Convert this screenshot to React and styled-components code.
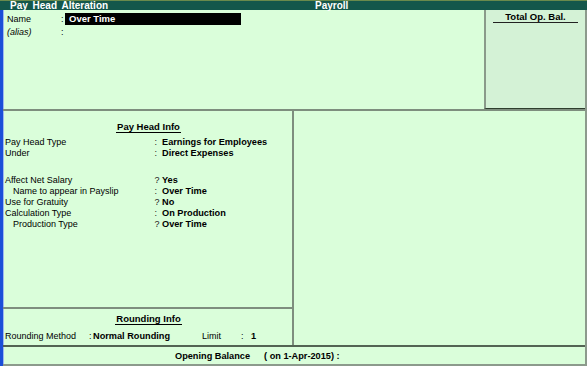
import React from "react";
import styled, { createGlobalStyle } from "styled-components";

const Global = createGlobalStyle`
  html, body { margin: 0; padding: 0; background: #dafeda; }
  body { font-family: "Liberation Sans", Arial, sans-serif; }
`;

const Screen = styled.div`
  width: 587px;
  height: 366px;
  display: flex;
  flex-direction: column;
  background: #dafeda;
  color: #000;
  font-size: 9px;
  overflow: hidden;
`;

const TitleBar = styled.div`
  height: 10px;
  flex: none;
  background: #14574b;
  border-top: 1px solid #6a8a4c;
  box-sizing: border-box;
  display: flex;
  align-items: center;
  color: #fff;
  font-weight: bold;
  font-size: 10px;
  line-height: 9px;
  padding-left: 10px;
`;

const TitleText = styled.span`
  word-spacing: 2px;
  width: ${(p) => p.$w}px;
`;

const Body = styled.div`
  flex: 1;
  display: flex;
  flex-direction: column;
  border-left: 3px solid #1b4fd8;
  border-right: 2px solid #8c9a8c;
  box-shadow: inset 1px 0 0 #9fb8ee;
`;

const TopSection = styled.div`
  height: 99px;
  flex: none;
  display: flex;
  border-bottom: 2px solid #7e8e7e;
`;

const NameArea = styled.div`
  flex: 1;
  padding: 2px 0 0 4px;
  display: flex;
  flex-direction: column;
`;

const NameRow = styled.div`
  display: flex;
  align-items: center;
  height: ${(p) => p.$h}px;
  font-size: 9px;
`;

const NameLabel = styled.span`
  width: 54px;
  font-style: ${(p) => (p.$italic ? "italic" : "normal")};
`;

const Colon = styled.span`
  width: ${(p) => p.$w}px;
`;

const InputBox = styled.div`
  width: 176px;
  height: 12px;
  background: #000;
  color: #fff;
  font-weight: bold;
  font-size: 9.5px;
  line-height: 12px;
  padding-left: 4px;
  box-sizing: border-box;
`;

const OpBalPanel = styled.div`
  width: 99px;
  flex: none;
  background: #d4f2d6;
  border-left: 2px solid #8a9a8a;
  border-bottom: 1px solid #2e3e2e;
  display: flex;
  flex-direction: column;
  align-items: stretch;
  padding-top: 1px;
`;

const OpBalTitle = styled.div`
  margin: 0 7px 0 7px;
  text-align: center;
  font-weight: bold;
  font-size: 9.5px;
  line-height: 11px;
  border-bottom: 1px solid #222;
`;

const Middle = styled.div`
  flex: 1;
  display: flex;
`;

const LeftColumn = styled.div`
  width: 289px;
  flex: none;
  display: flex;
  flex-direction: column;
  border-right: 2px solid #7e8e7e;
`;

const InfoArea = styled.div`
  flex: 1;
  padding: 10px 0 0 2px;
`;

const SectionTitle = styled.div`
  text-align: center;
  font-weight: bold;
  font-size: 9.5px;
  line-height: 11px;
  margin-bottom: ${(p) => p.$mb}px;
  span {
    border-bottom: 1px solid #000;
    padding: 0 1px;
  }
`;

const InfoRow = styled.div`
  display: grid;
  grid-template-columns: ${(p) => 149.5 - p.$indent}px 7.5px 1fr;
  padding-left: ${(p) => p.$indent}px;
  line-height: 11px;
  height: 11px;
  margin-top: ${(p) => p.$mt || 0}px;
  font-size: 9px;
`;

const Sep = styled.span`
  color: #222;
`;

const Value = styled.span`
  font-weight: bold;
  font-size: 9.2px;
  white-space: nowrap;
`;

const RoundingArea = styled.div`
  height: 38px;
  flex: none;
  border-top: 2px solid #7e8e7e;
  padding: 4px 0 0 2px;
  box-sizing: border-box;
`;

const RoundRow = styled.div`
  display: flex;
  line-height: 11px;
  font-size: 9px;
  white-space: nowrap;
`;

const Cell = styled.span`
  width: ${(p) => p.$w}px;
  flex: none;
  font-weight: ${(p) => (p.$bold ? "bold" : "normal")};
  font-size: ${(p) => (p.$bold ? "9.2px" : "9px")};
`;

const RightColumn = styled.div`
  flex: 1;
`;

const BottomBar = styled.div`
  height: 21px;
  flex: none;
  border-top: 2px solid #536453;
  border-bottom: 2px solid #8c9a8c;
  box-sizing: border-box;
  display: flex;
  align-items: center;
  padding-left: 172px;
  font-weight: bold;
  font-size: 9.2px;
`;

const Gap = styled.span`
  display: inline-block;
  width: ${(p) => p.$w}px;
`;

const info = [
  { label: "Pay Head Type", sep: ":", value: "Earnings for Employees" },
  { label: "Under", sep: ":", value: "Direct Expenses" },
  { label: "Affect Net Salary", sep: "?", value: "Yes", mt: 16 },
  { label: "Name to appear in Payslip", sep: ":", value: "Over Time", indent: 8 },
  { label: "Use for Gratuity", sep: "?", value: "No" },
  { label: "Calculation Type", sep: ":", value: "On Production" },
  { label: "Production Type", sep: "?", value: "Over Time", indent: 8 },
];

export default function App() {
  return (
    <>
      <Global />
      <Screen>
        <TitleBar>
          <TitleText $w={305}>Pay Head Alteration</TitleText>
          <TitleText>Payroll</TitleText>
        </TitleBar>
        <Body>
          <TopSection>
            <NameArea>
              <NameRow $h={13}>
                <NameLabel>Name</NameLabel>
                <Colon $w={4}>:</Colon>
                <InputBox>Over Time</InputBox>
              </NameRow>
              <NameRow $h={13}>
                <NameLabel $italic>(alias)</NameLabel>
                <Colon $w={4}>:</Colon>
              </NameRow>
            </NameArea>
            <OpBalPanel>
              <OpBalTitle>Total Op. Bal.</OpBalTitle>
            </OpBalPanel>
          </TopSection>
          <Middle>
            <LeftColumn>
              <InfoArea>
                <SectionTitle $mb={4.5}>
                  <span>Pay Head Info</span>
                </SectionTitle>
                {info.map((r) => (
                  <InfoRow key={r.label} $indent={r.indent || 0} $mt={r.mt}>
                    <span>{r.label}</span>
                    <Sep>{r.sep}</Sep>
                    <Value>{r.value}</Value>
                  </InfoRow>
                ))}
              </InfoArea>
              <RoundingArea>
                <SectionTitle $mb={6.5}>
                  <span>Rounding Info</span>
                </SectionTitle>
                <RoundRow>
                  <Cell $w={84}>Rounding Method</Cell>
                  <Cell $w={4}>:</Cell>
                  <Cell $w={109}>
                    <Value>Normal Rounding</Value>
                  </Cell>
                  <Cell $w={39}>Limit</Cell>
                  <Cell $w={10}>:</Cell>
                  <Cell $w={20} $bold>1</Cell>
                </RoundRow>
              </RoundingArea>
            </LeftColumn>
            <RightColumn />
          </Middle>
          <BottomBar>
            Opening Balance
            <Gap $w={14} />( on 1-Apr-2015) :
          </BottomBar>
        </Body>
      </Screen>
    </>
  );
}
